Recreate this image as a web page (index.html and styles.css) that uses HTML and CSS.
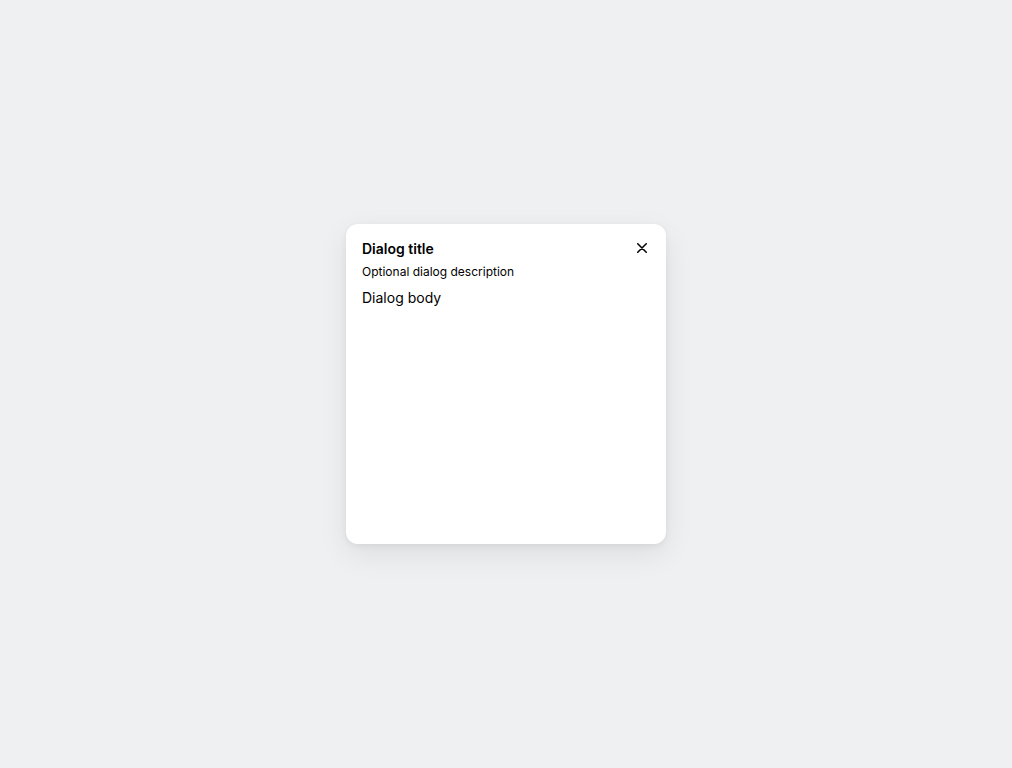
FILE: index.html
```html
<!DOCTYPE html>
<html lang="en">
<head>
<meta charset="utf-8">
<title>Dialog</title>
<link rel="stylesheet" href="styles.css">
</head>
<body>
<div class="stage">
  <div class="dialog" role="dialog" aria-labelledby="dlg-title">
    <div class="dialog-header">
      <div class="dialog-heading">
        <h2 class="dialog-title" id="dlg-title">Dialog title</h2>
        <p class="dialog-desc">Optional dialog description</p>
      </div>
      <button class="dialog-close" aria-label="Close">
        <svg width="10" height="10" viewBox="0 0 10 10" aria-hidden="true">
          <path d="M0.75 0.75 L9.25 9.25 M9.25 0.75 L0.75 9.25" stroke="#000" stroke-width="1.5" stroke-linecap="round"/>
        </svg>
      </button>
    </div>
    <div class="dialog-body">Dialog body</div>
  </div>
</div>
</body>
</html>
```
FILE: styles.css
```css
* { box-sizing: border-box; }
html, body {
  margin: 0;
  height: 100%;
}
body {
  background: #eff0f2;
  font-family: Inter, "Noto Sans", "Liberation Sans", sans-serif;
  color: #000;
}
.stage {
  height: 100%;
  display: flex;
  align-items: center;
  justify-content: center;
}
.dialog {
  width: 320px;
  height: 320px;
  background: #fff;
  border-radius: 12px;
  box-shadow: 0 10px 30px rgba(0, 0, 0, 0.08), 0 2px 6px rgba(0, 0, 0, 0.06);
  padding: 15px 16px 16px;
  display: flex;
  flex-direction: column;
}
.dialog-header {
  display: flex;
  align-items: flex-start;
  justify-content: space-between;
}
.dialog-title {
  margin: 0;
  font-size: 14px;
  line-height: 20px;
  font-weight: 600;
}
.dialog-desc {
  margin: 5px 0 0;
  font-size: 12px;
  line-height: 16px;
}
.dialog-close {
  border: 0;
  background: transparent;
  width: 24px;
  height: 24px;
  margin: -3px -4px 0 0;
  padding: 0;
  display: flex;
  align-items: center;
  justify-content: center;
  cursor: pointer;
}
.dialog-body {
  margin-top: 8px;
  font-size: 14px;
  line-height: 20px;
}
```
